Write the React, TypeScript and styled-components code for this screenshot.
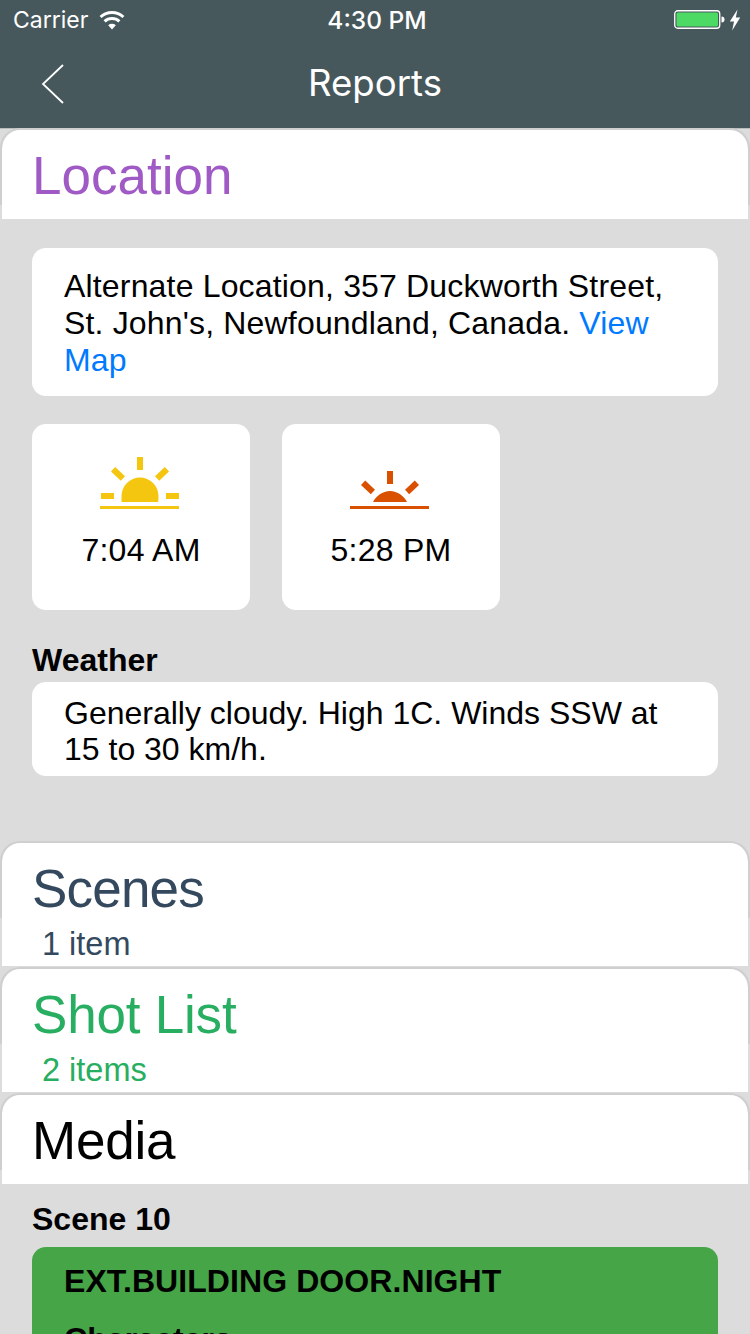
import React from "react";
import styled, { createGlobalStyle } from "styled-components";

const GlobalStyle = createGlobalStyle`
  html, body {
    margin: 0;
    padding: 0;
    background: #dcdcdc;
    overflow: hidden;
  }
`;

const Screen = styled.div`
  width: 750px;
  height: 1334px;
  overflow: hidden;
  background: #dcdcdc;
  font-family: "Liberation Sans", Arial, sans-serif;
  color: #000;
`;

const TopBar = styled.header`
  height: 128px;
  background: #47585c;
  border-bottom: 1px solid #b9bdbd;
  color: #fff;
  display: flex;
  flex-direction: column;
`;

const StatusBar = styled.div`
  height: 40px;
  display: grid;
  grid-template-columns: 1fr auto 1fr;
  align-items: center;
  padding: 0 9px 0 13px;
  font-family: "Inter", sans-serif;
`;

const Carrier = styled.div`
  display: flex;
  align-items: center;
  gap: 11px;
  font-size: 23px;
`;

const Clock = styled.div`
  font-weight: 500;
  font-size: 24.500px;
`;

const Power = styled.div`
  display: flex;
  justify-content: flex-end;
  align-items: center;
  gap: 3px;
`;

const NavBar = styled.div`
  height: 88px;
  display: flex;
  align-items: center;
  justify-content: center;
  position: relative;
`;

const BackButton = styled.svg`
  position: absolute;
  left: 41px;
  top: 24px;
`;

const NavTitle = styled.div`
  font-family: "Inter", sans-serif;
  font-size: 36.600px;
  margin-top: -2px;
`;

const Accordion = styled.section<{ $height: number }>`
  position: relative;
  box-sizing: border-box;
  height: ${(p) => p.$height}px;
  margin: 0 2px;
  background: #fff;
  border-radius: 20px 20px 0 0;
  padding-left: 30px;

  &::before {
    content: "";
    position: absolute;
    left: -2px;
    right: -2px;
    top: -1px;
    height: 77px;
    border: 2px solid #cfcfcf;
    border-bottom: none;
    border-radius: 20px 20px 0 0;
    box-sizing: border-box;
    pointer-events: none;
  }
`;

const AccordionTitle = styled.div<{ $color: string; $tracking?: number }>`
  color: ${(p) => p.$color};
  font-size: 53px;
  line-height: 58px;
  padding-top: 18px;
  letter-spacing: ${(p) => p.$tracking ?? 0}px;
`;

const AccordionCount = styled.div<{ $color: string }>`
  color: ${(p) => p.$color};
  font-size: 32.500px;
  line-height: 36px;
  padding: 8px 0 0 10px;
`;

const LocationBody = styled.div`
  padding: 29px 32px 0;
  height: 623px;
  box-sizing: border-box;
`;

const TextCard = styled.div`
  background: #fff;
  border-radius: 14px;
  padding: 20px 32px 17px;
  font-size: 32px;
  line-height: 37px;
  letter-spacing: 0.170px;
`;

const MapLink = styled.span`
  color: #007aff;
`;

const SunRow = styled.div`
  display: flex;
  gap: 32px;
  margin-top: 28px;
`;

const SunCard = styled.div`
  width: 218px;
  height: 186px;
  background: #fff;
  border-radius: 14px;
  display: flex;
  flex-direction: column;
  align-items: center;
  padding: 33px 0 0;
  box-sizing: border-box;
`;

const SunIcon = styled.svg`
  margin-right: 2px;
`;

const SunTime = styled.div`
  font-size: 32px;
  line-height: 37px;
  letter-spacing: 0.250px;
  margin-top: 21px;
`;

const SectionLabel = styled.div`
  font-size: 32px;
  line-height: 37px;
  font-weight: 700;
`;

const WeatherLabel = styled(SectionLabel)`
  margin-top: 32px;
`;

const WeatherCard = styled(TextCard)`
  margin-top: 3px;
  padding: 13px 32px 9px;
  line-height: 36px;
  letter-spacing: 0;
`;

const Gap = styled.div`
  height: 2px;
`;

const MediaBody = styled.div`
  padding: 17px 32px 0;
`;

const SceneCard = styled.div`
  margin-top: 9px;
  background: #46a546;
  border-radius: 14px 14px 0 0;
  padding: 16px 32px 0;
  height: 200px;
  font-size: 32px;
  line-height: 37px;
  font-weight: 700;
  letter-spacing: 0.080px;
`;

const Characters = styled.div`
  margin-top: 21px;
`;

const Wifi = () => (
  <svg width="26" height="20" viewBox="0 0 26 20">
    <path d="M13 19.500 9.200 15.300a5.600 5.600 0 0 1 7.600 0Z" fill="#fff" />
    <path d="M5.600 11.400a11 11 0 0 1 14.800 0" fill="none" stroke="#fff" strokeWidth="3" />
    <path d="M1.600 7a17 17 0 0 1 22.800 0" fill="none" stroke="#fff" strokeWidth="3" />
  </svg>
);

const Battery = () => (
  <svg width="52" height="22" viewBox="0 0 52 22">
    <rect x="0.750" y="1.750" width="45" height="17.500" rx="3" fill="none" stroke="#fff" strokeWidth="1.300" />
    <rect x="2.500" y="3.500" width="41.500" height="14" rx="1.500" fill="#4cd964" />
    <path d="M47.500 7.500c2 0 3 1.200 3 3s-1 3-3 3Z" fill="#fff" />
  </svg>
);

const Bolt = () => (
  <svg width="12" height="22" viewBox="0 0 12 22">
    <path d="M8.500 0.500 0.800 12.600h4.200L3.200 21.500l8-13H6.800Z" fill="#fff" />
  </svg>
);

const Sunrise = () => (
  <SunIcon width="80" height="54" viewBox="0 0 80 54">
    <g fill="#f5c60f">
      <rect x="37" y="0" width="6" height="13" />
      <path d="M11 14.500 15.200 10l9.800 9.300-4.200 4.500Z" />
      <path d="M69 14.500 64.800 10l-9.800 9.300 4.200 4.500Z" />
      <rect x="1" y="36" width="13" height="6" />
      <rect x="66" y="36" width="13" height="6" />
      <path d="M21.500 45v-6a18.500 18.500 0 0 1 37 0c0 2 0 4-.4 6Z" />
      <rect x="0" y="49" width="79" height="3" />
    </g>
  </SunIcon>
);

const Sunset = () => (
  <SunIcon width="80" height="54" viewBox="0 0 80 54">
    <g fill="#d95000">
      <rect x="37" y="14" width="6" height="13" />
      <path d="M11 28 15.200 23.500l9.800 9.300-4.200 4.500Z" />
      <path d="M69 28 64.800 23.500l-9.800 9.300 4.200 4.500Z" />
      <path d="M23 45c3-6 9.500-11 17-11s14 5 17 11Z" />
      <rect x="0" y="49" width="79" height="3" />
    </g>
  </SunIcon>
);

export default function App() {
  return (
    <Screen>
      <GlobalStyle />
      <TopBar>
        <StatusBar>
          <Carrier>
            Carrier
            <Wifi />
          </Carrier>
          <Clock>4:30 PM</Clock>
          <Power>
            <Battery />
            <Bolt />
          </Power>
        </StatusBar>
        <NavBar>
          <BackButton width="26" height="42" viewBox="0 0 26 42">
            <path d="M22 1 2 20l20 19" fill="none" stroke="#fff" strokeWidth="1.800" />
          </BackButton>
          <NavTitle>Reports</NavTitle>
        </NavBar>
      </TopBar>

      <Accordion $height={90}>
        <AccordionTitle $color="#a05ac5">Location</AccordionTitle>
      </Accordion>
      <LocationBody>
        <TextCard>
          Alternate Location, 357 Duckworth Street, St. John's, Newfoundland, Canada.{" "}
          <MapLink>View Map</MapLink>
        </TextCard>
        <SunRow>
          <SunCard>
            <Sunrise />
            <SunTime>7:04 AM</SunTime>
          </SunCard>
          <SunCard>
            <Sunset />
            <SunTime>5:28 PM</SunTime>
          </SunCard>
        </SunRow>
        <WeatherLabel>Weather</WeatherLabel>
        <WeatherCard>Generally cloudy. High 1C. Winds SSW at 15 to 30 km/h.</WeatherCard>
      </LocationBody>

      <Accordion $height={124}>
        <AccordionTitle $color="#34495e" $tracking={-0.8}>Scenes</AccordionTitle>
        <AccordionCount $color="#34495e">1 item</AccordionCount>
      </Accordion>
      <Gap />
      <Accordion $height={124}>
        <AccordionTitle $color="#27ae60" $tracking={-0.2}>Shot List</AccordionTitle>
        <AccordionCount $color="#27ae60">2 items</AccordionCount>
      </Accordion>
      <Gap />
      <Accordion $height={90}>
        <AccordionTitle $color="#000" $tracking={-0.2}>Media</AccordionTitle>
      </Accordion>
      <MediaBody>
        <SectionLabel>Scene 10</SectionLabel>
        <SceneCard>
          EXT.BUILDING DOOR.NIGHT
          <Characters>Characters</Characters>
        </SceneCard>
      </MediaBody>
    </Screen>
  );
}
